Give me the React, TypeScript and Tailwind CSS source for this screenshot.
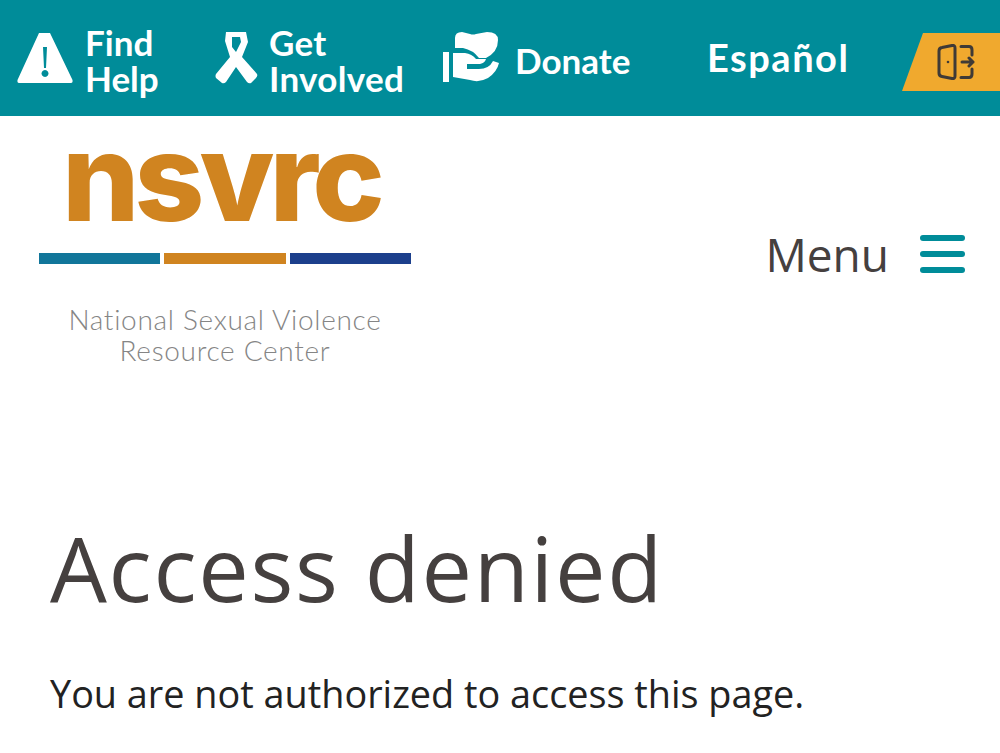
import React from "react";

const F = "font-['Lato','Open_Sans',sans-serif]";

function Warn() {
  return (
    <svg width="56" height="52" viewBox="0 0 56 52" className="shrink-0">
      <path fill="#fff" fillRule="evenodd" d="M22 1 H33 L55.500 48 Q56 51 54 51 H2 Q0 51 .5 48 Z M26 15 L27 36 H29 L30 15 Z M28 38 a3.500 3.500 0 1 0 .01 0 Z" />
    </svg>
  );
}
function Ribbon() {
  return (
    <svg width="44" height="52" viewBox="0 0 44 52" className="shrink-0">
      <path fill="#fff" fillRule="evenodd" d="M11 0 H31 L33 10 L27 25 L42 42 Q43 44 41 46 L36 51 Q34 52 32 50 L21 35 L11 50 Q9 52 7 51 L1 46 Q0 44 1 42 L15 25 L10 9 Z M17 5 L17 15 L21 20 L26 10 L25 5 Z" />
    </svg>
  );
}
function Hand() {
  return (
    <svg width="56" height="52" viewBox="0 0 56 52" className="shrink-0">
      <g fill="#fff">
        <path d="M0 20 H6 V50 H0 Z" />
        <path d="M10 21 H22 Q29 22 33 27 H43 Q42 31 37 32 H24 V37 H36 Q46 37 50 29 L56 31 Q54 40 45 46 Q36 51 27 48 L10 45 Z" />
        <path d="M12 6 Q12 0 19 0 L27 2 Q30 3 33 2 L44 0 Q55 0 55 8 Q55 20 43 26 H36 Q30 18 20 16 H12 Z" />
      </g>
    </svg>
  );
}
function Door() {
  return (
    <svg width="38" height="36" viewBox="0 0 38 36" fill="none" stroke="#3f3a36" strokeWidth="3" strokeLinecap="round" strokeLinejoin="round" className="shrink-0">
      <path d="M2 7 Q2 4 5 3.500 L15 1.500 Q18 1 18 4 V32 Q18 35 15 34.500 L5 32.500 Q2 32 2 29 Z" />
      <path d="M24 2.500 H32 Q35 2.500 35 6 V11 M24 33.500 H32 Q35 33.500 35 30 V25" />
      <path d="M25 18 H36 M32 14 L36 18 L32 22" />
      <circle cx="11" cy="18" r="1.300" fill="#3f3a36" stroke="none" />
    </svg>
  );
}

export default function App() {
  return (
    <div className={`w-full min-h-[753px] bg-white overflow-hidden ${F}`}>
      <header className="h-[116px] bg-[#008c99] flex items-center text-white font-bold pl-[17px]">
        <a className="flex items-center w-[198px]">
          <Warn />
          <span className="ml-[12px] mt-[3px] text-[35px] leading-[36px]">Find<br />Help</span>
        </a>
        <a className="flex items-center w-[228px]">
          <Ribbon />
          <span className="ml-[10px] mt-[3px] text-[35px] leading-[36px] tracking-[0.300px]">Get<br />Involved</span>
        </a>
        <a className="flex items-center w-[265px]">
          <Hand />
          <span className="ml-[16px] mt-[4px] text-[35px] leading-[36px]">Donate</span>
        </a>
        <span className="text-[38px] leading-[40px] -mt-[2px] -ml-[1px] tracking-[1.500px]">Español</span>
        <div className="ml-auto w-[98px] h-[58px] mt-[8px] bg-[#f0a92e] [clip-path:polygon(21px_0,100%_0,100%_100%,0_100%)] flex items-center pl-[35px]">
          <Door />
        </div>
      </header>
      <div className="flex items-start justify-between pr-[35px]">
        <div className="ml-[39px] w-[372px] flex flex-col items-center">
          <div className="h-[113px] mt-[4px] pr-[8px] text-[122px] leading-[113px] font-extrabold text-[#d08420] tracking-[-5px] font-['Inter',sans-serif]">nsvrc</div>
          <div className="flex gap-[4px] w-full mt-[20px]">
            <div className="h-[11px] flex-1 bg-[#11769a]" />
            <div className="h-[11px] flex-1 bg-[#d08420]" />
            <div className="h-[11px] flex-1 bg-[#1c3f8c]" />
          </div>
          <div className="mt-[40px] text-center text-[28px] leading-[31px] text-[#858585] font-light tracking-[0.7px]">National Sexual Violence<br />Resource Center</div>
        </div>
        <div className="flex items-center mt-[115px]">
          <span className="text-[46px] leading-[46px] text-[#45403f] font-['Open_Sans',sans-serif]">Menu</span>
          <div className="ml-[31px] w-[45px] flex flex-col gap-[10px]">
            <div className="h-[6px] rounded-full bg-[#008c99]" />
            <div className="h-[6px] rounded-full bg-[#008c99]" />
            <div className="h-[6px] rounded-full bg-[#008c99]" />
          </div>
        </div>
      </div>
      <main className="pl-[50px] mt-[151px] font-['Open_Sans',sans-serif]">
        <h1 className="text-[90px] leading-[100px] tracking-[1.700px] text-[#45403f]">Access denied</h1>
        <p className="mt-[55px] text-[37.800px] leading-[44px] text-[#222]">You are not authorized to access this page.</p>
      </main>
    </div>
  );
}
